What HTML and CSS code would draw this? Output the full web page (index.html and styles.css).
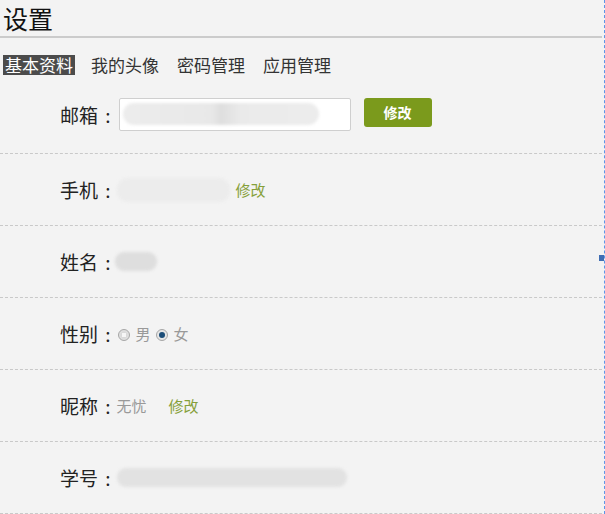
FILE: index.html
```html
<!DOCTYPE html>
<html lang="zh-CN">

<head>
    <meta charset="UTF-8">
    <meta name="viewport" content="width=device-width, initial-scale=1.0">
    <title>设置</title>
    <link rel="stylesheet" href="styles.css">
</head>

<body>
    <div class="page">
        <h1 class="title">设置</h1>

        <ul class="tabs">
            <li class="tab active">基本资料</li>
            <li class="tab">我的头像</li>
            <li class="tab">密码管理</li>
            <li class="tab">应用管理</li>
        </ul>

        <div class="rows">
            <div class="row first">
                <span class="label">邮箱 :</span>
                <div class="input-box">
                    <span class="blob blob-email"></span>
                </div>
                <button class="btn">修改</button>
            </div>
            <div class="row">
                <span class="label">手机 :</span>
                <span class="blob blob-phone"></span>
                <a class="link" href="#">修改</a>
            </div>
            <div class="row">
                <span class="label">姓名 :</span>
                <span class="blob blob-name"></span>
            </div>
            <div class="row">
                <span class="label">性别 :</span>
                <span class="radio"></span>
                <span class="value">男</span>
                <span class="radio on"></span>
                <span class="value">女</span>
            </div>
            <div class="row">
                <span class="label">昵称 :</span>
                <span class="value nick">无忧</span>
                <a class="link" href="#">修改</a>
            </div>
            <div class="row">
                <span class="label">学号 :</span>
                <span class="blob blob-id"></span>
            </div>
        </div>

        <span class="handle"></span>
    </div>
</body>

</html>
```

FILE: styles.css
```css
html,
body {
    margin: 0;
    padding: 0;
}

body {
    font-family: "Noto Sans CJK SC", "Liberation Sans", sans-serif;
    background-color: #f3f3f3;
    color: #222;
}

.page {
    position: relative;
    width: 604px;
    min-height: 514px;
    border-right: 1px dashed #5b95e8;
}

.title {
    margin: 0;
    padding: 0 0 0 3px;
    font-size: 25px;
    font-weight: normal;
    line-height: 36px;
    color: #111;
    border-bottom: 2px solid #cbcbcb;
    width: 599px;
}

.tabs {
    list-style: none;
    margin: 17px 0 0 3px;
    padding: 0;
    display: flex;
    gap: 14px;
}

.tab {
    font-size: 17px;
    line-height: 20px;
    padding: 0 2px;
    color: #333;
}

.tab.active {
    background-color: #4b4b4b;
    color: #fff;
}

.row {
    box-sizing: border-box;
    height: 72px;
    width: 602px;
    display: flex;
    align-items: center;
    padding-left: 60px;
    border-bottom: 1px dashed #c9c9c9;
}

.row.first {
    height: 79px;
}

.label {
    font-size: 19px;
    color: #222;
    margin-right: 6px;
    white-space: pre;
    word-spacing: 3px;
}

.value {
    font-size: 15px;
    color: #999;
}

.nick {
    margin-right: 22px;
}

.link {
    font-size: 15px;
    color: #86a03a;
    text-decoration: none;
}

.input-box {
    box-sizing: border-box;
    width: 232px;
    height: 33px;
    background-color: #fff;
    border: 1px solid #cfcfcf;
    border-radius: 2px;
    display: flex;
    align-items: center;
    padding-left: 3px;
    margin-left: 2px;
}

.btn {
    margin-left: 13px;
    width: 68px;
    height: 29px;
    border: none;
    border-radius: 3px;
    background-color: #7b9a1c;
    color: #fff;
    font-family: inherit;
    font-size: 14px;
    font-weight: bold;
    margin-top: -4px;
}

.blob {
    display: block;
    background-color: #e6e6e6;
    border-radius: 11px;
    filter: blur(1.5px);
}

.blob-email {
    width: 196px;
    height: 22px;
    background: linear-gradient(90deg, #ececec 0%, #e8e8e8 45%, #dedede 50%, #eaeaea 60%, #ececec 100%);
}

.blob-phone {
    width: 113px;
    height: 24px;
    background-color: #ececec;
    margin-right: 6px;
}

.blob-name {
    width: 42px;
    height: 19px;
    background-color: #dedede;
    border-radius: 9px;
    margin-left: -2px;
}

.blob-id {
    width: 230px;
    height: 19px;
    background-color: #e2e2e2;
    border-radius: 9px;
}

.radio {
    box-sizing: border-box;
    width: 12px;
    height: 12px;
    border-radius: 50%;
    border: 1px solid #a6a6a6;
    background: radial-gradient(circle, #f6f6f6 0, #f6f6f6 30%, #d8d8d8 31%, #e8e8e8 100%);
    margin: 2px 6px 0 1px;
    position: relative;
}

.radio.on {
    background: #e6e6e6;
    margin-left: 5px;
}

.radio.on::after {
    content: "";
    position: absolute;
    left: 2px;
    top: 2px;
    width: 6px;
    height: 6px;
    border-radius: 50%;
    background-color: #1c4d78;
}

.handle {
    position: absolute;
    left: 599px;
    top: 255px;
    width: 5px;
    height: 6px;
    background-color: #3f6db3;
}
```
